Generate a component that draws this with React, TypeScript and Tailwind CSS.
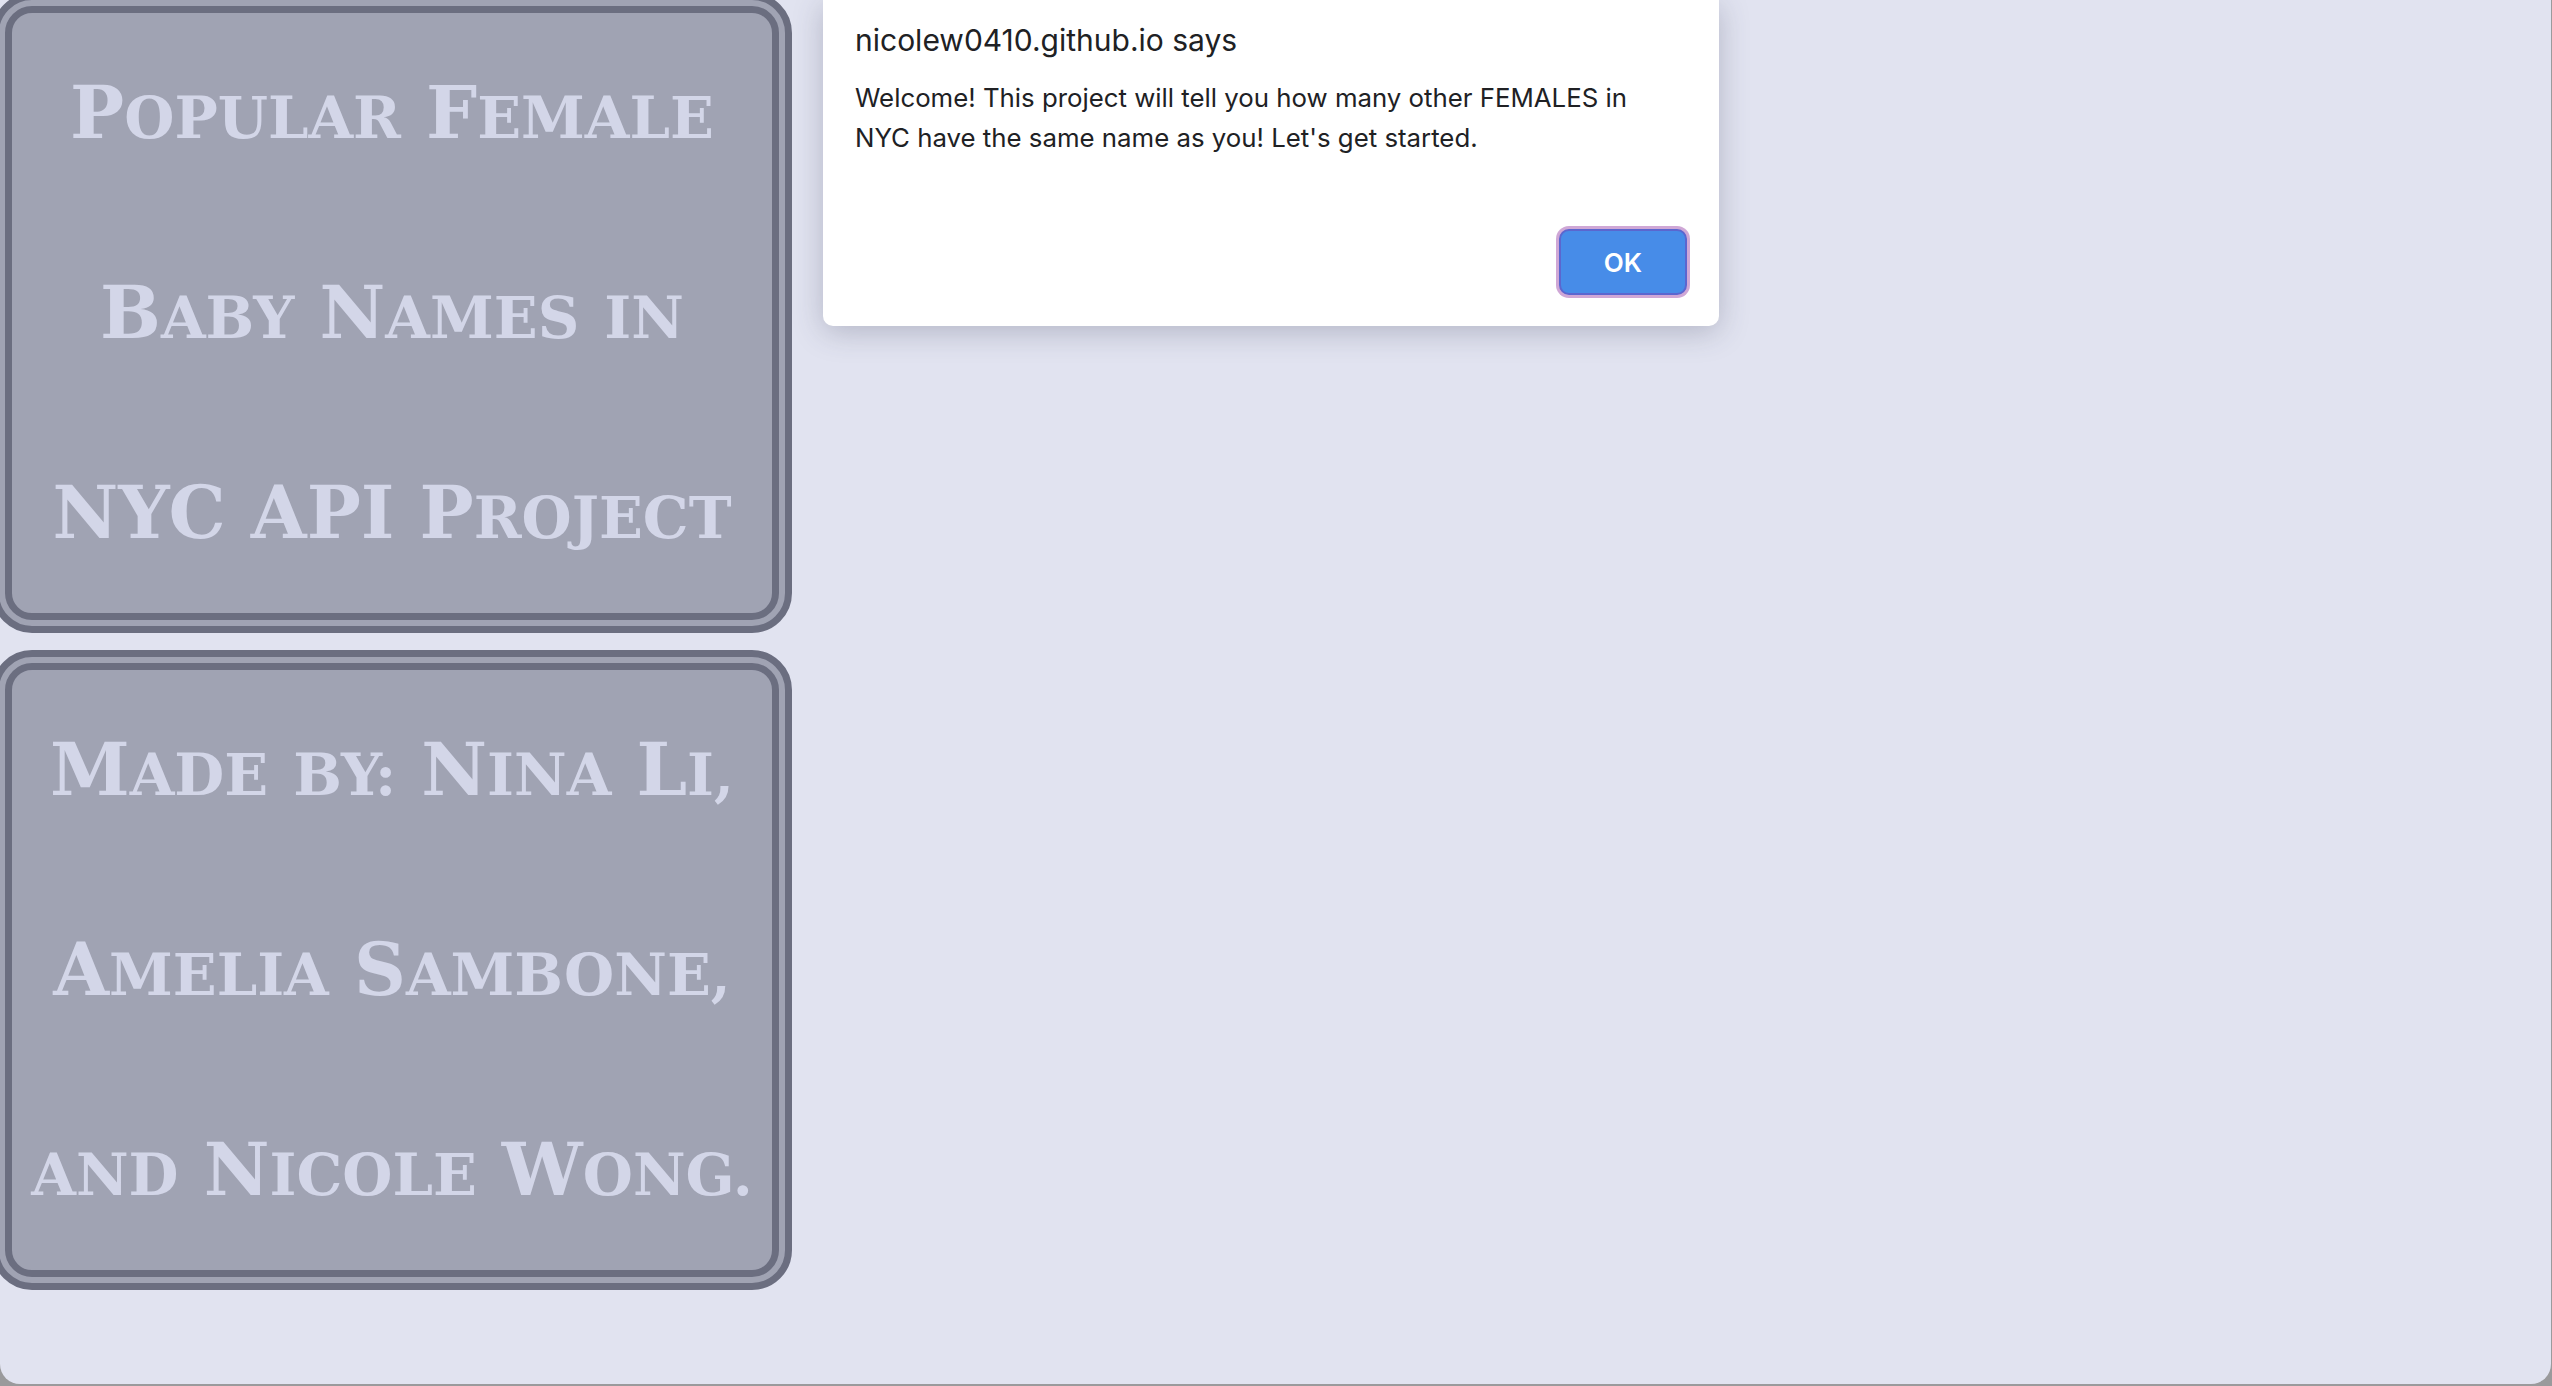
import React from "react";

type Line = { big: string; rest: string }[];

const titleLines: Line[] = [
  [{ big: "P", rest: "opular" }, { big: "F", rest: "emale" }],
  [{ big: "B", rest: "aby" }, { big: "N", rest: "ames" }, { big: "", rest: "in" }],
  [{ big: "NYC", rest: "" }, { big: "API", rest: "" }, { big: "P", rest: "roject" }],
];

const creditLines: Line[] = [
  [{ big: "M", rest: "ade" }, { big: "", rest: "by:" }, { big: "N", rest: "ina" }, { big: "L", rest: "i," }],
  [{ big: "A", rest: "melia" }, { big: "S", rest: "ambone," }],
  [{ big: "", rest: "and" }, { big: "N", rest: "icole" }, { big: "W", rest: "ong." }],
];

const Card = ({ lines }: { lines: Line[] }) => (
  <div className="h-[640px] w-[800px] rounded-[40px] border-[20px] border-double border-[#6b6e80] bg-[#a0a3b3] text-center font-['DejaVu_Serif',serif] text-[72px] font-bold leading-[200px] text-[#d3d6e8]">
    {lines.map((line, i) => (
      <div key={i} className="whitespace-nowrap">
        {line.map((w, j) => (
          <React.Fragment key={j}>
            {j > 0 && " "}
            <span className="leading-none">{w.big}</span>
            <span className="text-[0.8em] uppercase leading-none">{w.rest}</span>
          </React.Fragment>
        ))}
      </div>
    ))}
  </div>
);

const App = () => {
  return (
    <div className="relative h-[1386px] w-full overflow-hidden bg-[#9a9a9c]">
      <div className="h-[1384px] w-[2551px] overflow-hidden rounded-b-[20px] bg-[#e1e3f0]">
        <div className="-ml-[8px] -mt-[7px] flex w-[800px] flex-col gap-[17px]">
          <Card lines={titleLines} />
          <Card lines={creditLines} />
        </div>
      </div>

      {/* alert dialog */}
      <div className="absolute left-[823px] top-0 flex h-[326px] w-[896px] flex-col rounded-b-[10px] bg-white px-[32px] pt-[15px] font-['Inter',sans-serif] text-[#202124] shadow-[0_6px_30px_rgba(60,64,90,0.28)]">
        <div className="text-[30px] leading-[50px]">nicolew0410.github.io says</div>
        <p className="mt-[13px] text-[25.8px] leading-[40px]">
          Welcome! This project will tell you how many other FEMALES in
          <br />
          NYC have the same name as you! Let's get started.
        </p>
        <div className="mt-auto mb-[31px] flex justify-end">
          <button className="h-[66px] w-[128px] rounded-[10px] border-2 border-[#5b66cf] bg-[#478ce8] text-[26px] font-semibold text-white shadow-[0_0_0_3px_#cfa7d6]">
            OK
          </button>
        </div>
      </div>
    </div>
  );
};

export default App;
